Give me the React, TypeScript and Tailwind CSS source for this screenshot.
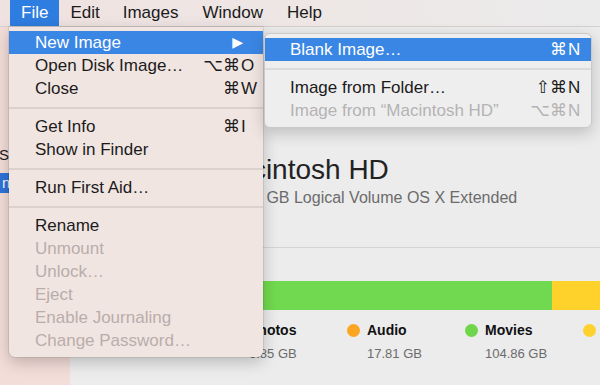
import clsx from "clsx";

type Row = {
  label?: string;
  mods?: string;
  k?: string;
  disabled?: boolean;
  active?: boolean;
  arrow?: boolean;
  sep?: boolean;
};

const fileMenu: Row[] = [
  { label: "New Image", active: true, arrow: true },
  { label: "Open Disk Image…", mods: "⌥⌘", k: "O" },
  { label: "Close", mods: "⌘", k: "W" },
  { sep: true },
  { label: "Get Info", mods: "⌘", k: "I" },
  { label: "Show in Finder" },
  { sep: true },
  { label: "Run First Aid…" },
  { sep: true },
  { label: "Rename" },
  { label: "Unmount", disabled: true },
  { label: "Unlock…", disabled: true },
  { label: "Eject", disabled: true },
  { label: "Enable Journaling", disabled: true },
  { label: "Change Password…", disabled: true },
];

const newImageMenu: Row[] = [
  { label: "Blank Image…", mods: "⌘", k: "N", active: true },
  { sep: true },
  { label: "Image from Folder…", mods: "⇧⌘", k: "N" },
  { label: "Image from “Macintosh HD”", mods: "⌥⌘", k: "N", disabled: true },
];

// last column runs off the window edge, only its dot shows
const legend = [
  { name: "Photos", size: "6.85 GB", dot: "bg-[#f0574f]" },
  { name: "Audio", size: "17.81 GB", dot: "bg-[#fba523]" },
  { name: "Movies", size: "104.86 GB", dot: "bg-[#6fd64b]" },
  { name: "", size: "", dot: "bg-[#fdd12e]" },
];

function MenuRows({ rows, sub }: { rows: Row[]; sub?: boolean }) {
  return (
    <>
      {rows.map((r, i) =>
        r.sep ? (
          <div key={i} className="flex h-[15px] items-center">
            <div className={clsx("h-[2px] w-full", sub ? "bg-[#dcdcdc]" : "bg-[#ddd1ce]")} />
          </div>
        ) : (
          <div
            key={i}
            className={clsx(
              "flex h-[23px] items-center",
              sub ? "pl-[25px] pr-[7px]" : "pl-[26px] pr-[6px]",
              r.active
                ? "bg-[#3a86e5] text-white"
                : r.disabled
                  ? sub
                    ? "text-[#b3b3b3]"
                    : "text-[#b9adab]"
                  : "text-[#1b1b1b]",
            )}
          >
            <span className="flex-1 whitespace-nowrap">{r.label}</span>
            {r.arrow && <span className="mr-[14px] text-[14px]">▶</span>}
            {r.k && (
              <>
                <span className="whitespace-nowrap text-right">{r.mods}</span>
                <span className="w-[17px] pl-[1px]">{r.k}</span>
              </>
            )}
          </div>
        ),
      )}
    </>
  );
}

export default function App() {
  return (
    <div className="relative flex h-[385px] w-[600px] flex-col overflow-hidden bg-[#ececec] font-['Liberation_Sans','DejaVu_Sans',sans-serif] text-[17px]">
      {/* menu bar */}
      <div className="flex h-[27px] shrink-0 items-stretch border-b border-[#d6d0cf] bg-linear-to-r from-[#f0e2e0] to-[#ebebeb] pl-[10px] text-[#1b1b1b]">
        <div className="flex items-center bg-[#2e7de0] px-[11px] text-white">File</div>
        <div className="flex items-center px-[11px]">Edit</div>
        <div className="flex items-center px-[12px]">Images</div>
        <div className="flex items-center px-[12px]">Window</div>
        <div className="flex items-center px-[12px]">Help</div>
      </div>

      {/* window behind */}
      <div className="flex flex-1">
        <div className="w-[70px] shrink-0 bg-[#f3ddd8] pt-[118px] text-[15px]">
          <div className="flex h-[20px] items-center -ml-[1px] text-[#1b1b1b]">Si</div>
          <div className="mt-[8px] flex h-[20px] items-center bg-[#2f73d8] pl-[2px] text-white">n</div>
        </div>

        <div className="flex flex-1 flex-col bg-[#ececec] pl-[143px]">
          <div className="mt-[127px] whitespace-nowrap text-[28px] leading-[32px] text-[#222]">Macintosh HD</div>
          <div className="mt-[2px] whitespace-nowrap text-[16px] leading-[20px] text-[#6b6b6b]">
            250.79 GB Logical Volume OS X Extended
          </div>
          <div className="mt-[39px] h-px bg-[#d4d4d4]" />
          <div className="mt-[33px] flex h-[29px]">
            <div className="w-[14px] bg-[#f0574f]" />
            <div className="w-[13px] bg-[#fba523]" />
            <div className="w-[312px] bg-[#71d94f]" />
            <div className="flex-1 bg-[#fed12b]" />
          </div>
          <div className="mt-[10px] ml-[16px] flex whitespace-nowrap">
            {legend.map((l, i) => (
              <div key={i} className="w-[118px] shrink-0">
                <div className="flex h-[20px] items-center gap-[7px]">
                  <span className={clsx("h-[13px] w-[13px] shrink-0 rounded-full", l.dot)} />
                  {l.name && <span className="text-[14px] font-bold text-[#111]">{l.name}</span>}
                </div>
                {l.size && (
                  <div className="mt-[5px] pl-[20px] text-[13px] leading-[18px] text-[#6b6b6b]">{l.size}</div>
                )}
              </div>
            ))}
          </div>
        </div>
      </div>

      {/* File menu */}
      <div className="absolute left-[9px] top-[27px] w-[254px] rounded-b-[6px] bg-[#f1e5e2] pb-[5px] pt-[4px] shadow-[0_5px_16px_rgba(0,0,0,0.22),0_0_0_1px_rgba(0,0,0,0.08)]">
        <MenuRows rows={fileMenu} />
      </div>

      {/* New Image submenu */}
      <div className="absolute left-[264px] top-[33px] w-[328px] overflow-hidden rounded-[6px] border border-[#c9c9c9] bg-[#efeeef] pb-[5px] pt-[4px] shadow-[0_5px_16px_rgba(0,0,0,0.2)]">
        <MenuRows rows={newImageMenu} sub />
      </div>
    </div>
  );
}
